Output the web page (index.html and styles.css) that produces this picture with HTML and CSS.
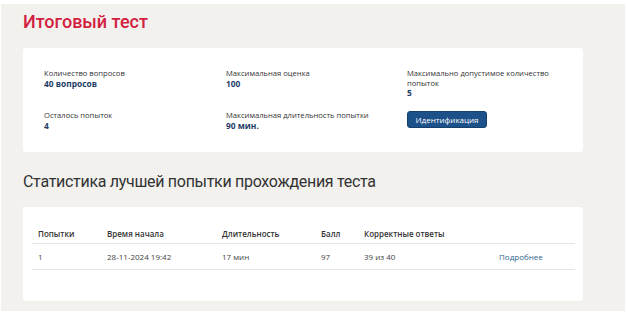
FILE: index.html
```html
<!DOCTYPE html>
<html lang="ru">
<head>
  <meta charset="UTF-8">
  <meta name="viewport" content="width=device-width, initial-scale=1.0">
  <title>Итоговый тест</title>
  <link rel="stylesheet" href="styles.css">
</head>
<body>

  <div class="page">
    <h1 class="page-title">Итоговый тест</h1>

    <!-- Test info -->
    <div class="card info-card">
      <div class="info-item">
        <div class="info-label">Количество вопросов</div>
        <div class="info-value">40 вопросов</div>
      </div>
      <div class="info-item">
        <div class="info-label">Максимальная оценка</div>
        <div class="info-value">100</div>
      </div>
      <div class="info-item">
        <div class="info-label">Максимально допустимое количество попыток</div>
        <div class="info-value">5</div>
      </div>
      <div class="info-item">
        <div class="info-label">Осталось попыток</div>
        <div class="info-value">4</div>
      </div>
      <div class="info-item">
        <div class="info-label">Максимальная длительность попытки</div>
        <div class="info-value">90 мин.</div>
      </div>
      <div class="info-item">
        <button type="button" class="btn-ident">Идентификация</button>
      </div>
    </div>

    <h2 class="section-title">Статистика лучшей попытки прохождения теста</h2>

    <!-- Best attempt -->
    <div class="card stats-card">
      <table class="stats-table">
        <thead>
          <tr>
            <th class="col-try">Попытки</th>
            <th class="col-start">Время начала</th>
            <th class="col-dur">Длительность</th>
            <th class="col-score">Балл</th>
            <th class="col-correct">Корректные ответы</th>
            <th class="col-link"></th>
          </tr>
        </thead>
        <tbody>
          <tr>
            <td>1</td>
            <td>28-11-2024 19:42</td>
            <td>17 мин</td>
            <td>97</td>
            <td>39 из 40</td>
            <td><a href="#" class="more-link">Подробнее</a></td>
          </tr>
        </tbody>
      </table>
    </div>
  </div>

</body>
</html>
```

FILE: styles.css
```css
body {
  margin: 0;
  padding: 4px 2px 18px 1px;
  background-color: #fff;
  font-family: "Open Sans", "Noto Sans", sans-serif;
  color: #333;
}
.page {
  background-color: #f2f1ee;
  padding: 6px 42px 10px 22px;
  height: 307px;
  box-sizing: border-box;
}
.page-title {
  margin: 0 0 14px 0;
  font-family: Roboto, "Open Sans", sans-serif;
  font-size: 18px;
  line-height: 24px;
  font-weight: 500;
  color: #d2203f;
}
.card {
  background-color: #fff;
  border-radius: 3px;
}
.info-card {
  display: grid;
  grid-template-columns: 182px 181px 150px;
  align-items: start;
  row-gap: 13px;
  padding: 21px 21px 23px 21px;
  height: 104px;
  box-sizing: border-box;
}
.info-label {
  font-size: 7.6px;
  line-height: 9.5px;
  color: #333;
}
.info-value {
  font-size: 8.4px;
  line-height: 10px;
  font-weight: 700;
  color: #1e3d66;
}
.btn-ident {
  display: block;
  width: 80px;
  height: 17px;
  padding: 0;
  border: 1px solid #16406d;
  border-radius: 3px;
  background-color: #1d5189;
  color: #fff;
  font-family: inherit;
  font-size: 8px;
  cursor: pointer;
}
.section-title {
  margin: 18px 0 13px 0;
  font-family: Roboto, "Open Sans", sans-serif;
  font-size: 16px;
  line-height: 24px;
  font-weight: 400;
  letter-spacing: -0.3px;
  color: #333;
}
.stats-card {
  padding: 17px 8px 32px 9px;
  height: 94px;
  box-sizing: border-box;
}
.stats-table {
  width: 543px;
  border-collapse: collapse;
  font-size: 8px;
}
.stats-table th {
  text-align: left;
  font-weight: 600;
  padding: 0 6px;
  height: 19px;
  border-bottom: 1px solid #e4e4e4;
  color: #333;
}
.stats-table td {
  padding: 0 6px;
  height: 25px;
  border-bottom: 1px solid #e4e4e4;
  color: #444;
}
.col-try { width: 57px; }
.col-start { width: 103px; }
.col-dur { width: 87px; }
.col-score { width: 31px; }
.col-correct { width: 123px; }
.more-link {
  color: #2f5f8e;
  text-decoration: none;
}
```
